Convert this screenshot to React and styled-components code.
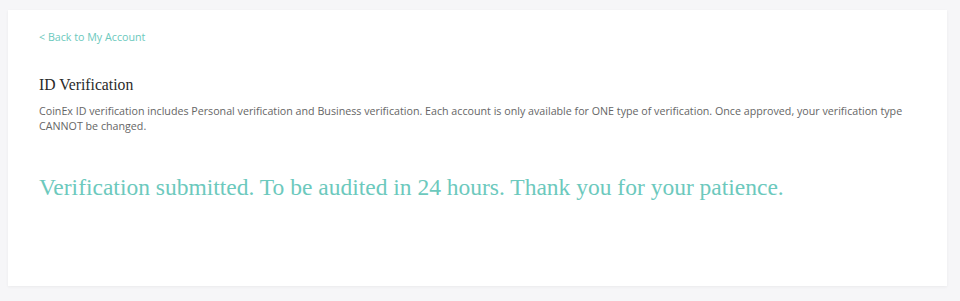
import React from "react";
import styled, { createGlobalStyle } from "styled-components";

const GlobalStyle = createGlobalStyle`
  html, body {
    margin: 0;
    padding: 0;
    background: #f6f6f8;
  }
  body {
    font-family: "Open Sans", "Liberation Sans", sans-serif;
  }
`;

const Page = styled.div`
  padding: 10px 13px 15px 8px;
  height: 301px;
  box-sizing: border-box;
`;

const Card = styled.div`
  background: #fff;
  height: 100%;
  box-sizing: border-box;
  padding: 14px 31px 0 31px;
  box-shadow: 0 1px 3px rgba(0, 0, 0, 0.05);
`;

const BackLink = styled.a`
  display: inline-block;
  font-size: 10.7px;
  color: #6cc9bd;
  text-decoration: none;
  cursor: pointer;
`;

const Title = styled.h2`
  margin: 30px 0 0;
  font-family: "Liberation Serif", "Times New Roman", serif;
  font-weight: 400;
  font-size: 15.7px;
  color: #2a2a2a;
`;

const Intro = styled.p`
  margin: 10px 0 0;
  font-size: 10.7px;
  line-height: 15px;
  color: #666;
`;

const Submitted = styled.div`
  margin-top: 40px;
  font-family: "Liberation Serif", "Times New Roman", serif;
  font-size: 23.5px;
  color: #6cc9bd;
`;

export default function App() {
  return (
    <>
      <GlobalStyle />
      <Page>
        <Card>
          <BackLink>&lt; Back to My Account</BackLink>
          <Title>ID Verification</Title>
          <Intro>
            CoinEx ID verification includes Personal verification and Business
            verification. Each account is only available for ONE type of
            verification. Once approved, your verification type CANNOT be
            changed.
          </Intro>
          <Submitted>
            Verification submitted. To be audited in 24 hours. Thank you for
            your patience.
          </Submitted>
        </Card>
      </Page>
    </>
  );
}
